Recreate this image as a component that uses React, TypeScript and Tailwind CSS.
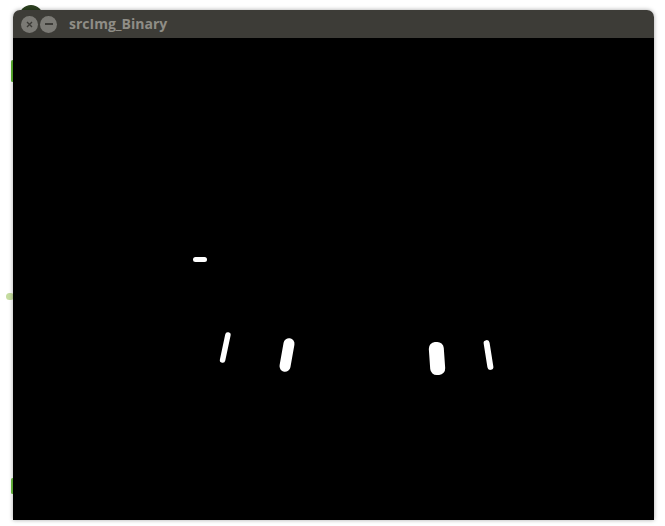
import React from "react";

function TitleButton({ kind }: { kind: "close" | "min" }) {
  return (
    <div className="w-[17px] h-[17px] rounded-full bg-[#7b7a75] flex items-center justify-center">
      {kind === "close" ? (
        <svg width="7" height="7" viewBox="0 0 7 7">
          <path d="M1 1 L6 6 M6 1 L1 6" stroke="#3c3b37" strokeWidth="1.4" />
        </svg>
      ) : (
        <div className="w-[8px] h-[1.5px] bg-[#3c3b37]" />
      )}
    </div>
  );
}

export default function App() {
  return (
    <div className="relative w-[665px] h-[526px] bg-white overflow-hidden pl-[13px] pt-[10px]">
      {/* bits of the desktop showing behind the window */}
      <div className="absolute left-[19px] top-[5px] w-[24px] h-[24px] rounded-full bg-[#2c4020]" />
      <div className="absolute left-[11px] top-[60px] w-[3px] h-[22px] rounded-full bg-[#5cb531]" />
      <div className="absolute left-[6px] top-[293px] w-[8px] h-[7px] rounded-full bg-[#c5dca0]" />
      <div className="absolute left-[11px] top-[478px] w-[3px] h-[16px] rounded-full bg-[#6cc040]" />

      <div className="relative w-[641px] rounded-t-[7px] overflow-hidden shadow-[0_0_4px_rgba(0,0,0,0.35)]">
        <div className="h-[28px] bg-[#3d3c37] flex items-center pl-[8px] gap-[2px]">
          <TitleButton kind="close" />
          <TitleButton kind="min" />
          <span
            className="ml-[10px] text-[14px] font-bold text-[#8f8d86] leading-none"
            style={{ fontFamily: '"Open Sans", "DejaVu Sans", sans-serif' }}
          >
            srcImg_Binary
          </span>
        </div>
        <div className="h-[482px] bg-black">
          <svg width="641" height="482" viewBox="13 38 641 482">
            <rect x="193" y="257" width="14" height="5" rx="2.5" fill="#fff" />
            <rect x="222.5" y="332" width="5.5" height="31" rx="2.75" transform="rotate(12 225.25 347.5)" fill="#fff" />
            <rect x="281.5" y="338" width="11" height="34" rx="5.5" transform="rotate(10 287 355)" fill="#fff" />
            <rect x="429.5" y="342" width="15" height="33" rx="6.5" transform="rotate(-4 437 358.5)" fill="#fff" />
            <rect x="485.5" y="340" width="6" height="30" rx="3" transform="rotate(-9 488.5 355)" fill="#fff" />
          </svg>
        </div>
      </div>
    </div>
  );
}
